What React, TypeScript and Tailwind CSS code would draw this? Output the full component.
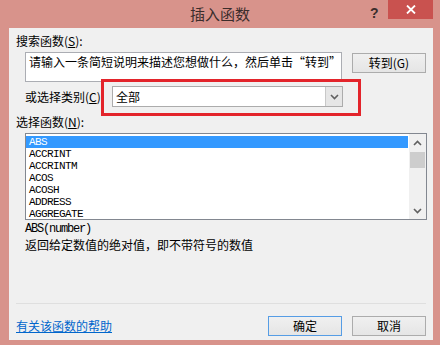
import React from "react";

const cjk = { fontFamily: '"Noto Sans CJK SC", "Noto Sans", sans-serif' };
const mono = { fontFamily: '"Liberation Mono", "Noto Sans CJK SC", monospace' };

const functions = ["ABS", "ACCRINT", "ACCRINTM", "ACOS", "ACOSH", "ADDRESS", "AGGREGATE"];

const Chevron = ({ up }: { up?: boolean }) => (
  <svg width="9" height="6" viewBox="0 0 9 6">
    <path
      d={up ? "M1 5 L4.5 1.5 L8 5" : "M1 1 L4.5 4.5 L8 1"}
      fill="none"
      stroke="#606060"
      strokeWidth="1.6"
    />
  </svg>
);

const DialogButton = ({ label, primary }: { label: string; primary?: boolean }) => (
  <button
    className={
      "w-[74px] h-[20px] flex items-center justify-center text-[12px] leading-none text-black bg-gradient-to-b from-[#f0f0f0] to-[#e5e5e5] border " +
      (primary ? "border-[#569de5]" : "border-[#acacac]")
    }
    style={cjk}
  >
    {label}
  </button>
);

const App = () => {
  return (
    <div className="relative w-[440px] h-[345px] bg-[#d8938b] flex flex-col overflow-hidden" style={cjk}>
      {/* title bar */}
      <div className="relative h-[28px] flex items-center justify-center shrink-0">
        <span className="text-[15px] text-[#3b2d2b] leading-none -mt-[1px]">插入函数</span>
        <span className="absolute left-[370px] top-[3px] text-[14px] font-bold text-[#3b2d2b]" style={{ fontFamily: '"Liberation Sans", sans-serif' }}>
          ?
        </span>
        <div className="absolute left-[388px] top-0 w-[45px] h-[19px] bg-[#c9524f] flex items-center justify-center">
          <svg width="10" height="9" viewBox="0 0 10 9">
            <path d="M1 0.5 L9 8.5 M9 0.5 L1 8.5" stroke="white" strokeWidth="1.8" />
          </svg>
        </div>
      </div>

      {/* client area */}
      <div className="mx-[9px] w-[424px] h-[312px] bg-[#f0f0f0] flex flex-col text-[12px] leading-[16px] text-black pt-[5px] pb-[4px]">
        <div className="ml-[7px] h-[16px]">搜索函数(<span className="underline">S</span>):</div>

        <div className="flex mt-[3px]">
          <div className="ml-[16px] w-[317px] h-[30px] bg-white border border-[#abadb3] pl-[3px] pt-[1px] whitespace-nowrap">
            请输入一条简短说明来描述您想做什么，然后单击“转到”
          </div>
          <div className="ml-[10px] mt-[1px]">
            <DialogButton label="转到(G)" />
          </div>
        </div>

        <div className="flex items-center mt-[4px] h-[21px]">
          <div className="ml-[16px] w-[87px] whitespace-nowrap">或选择类别(<span className="underline">C</span>):</div>
          <div className="w-[231px] h-[21px] bg-white border border-[#acacac] flex items-center">
            <span className="pl-[3px] flex-1">全部</span>
            <div className="w-[17px] h-full bg-[#e6e6e6] border-l border-[#c8c8c8] flex items-center justify-center">
              <Chevron />
            </div>
          </div>
        </div>

        <div className="ml-[7px] mt-[7px] h-[16px]">选择函数(<span className="underline">N</span>):</div>

        <div className="ml-[16px] mt-[3px] w-[402px] h-[87px] bg-white border border-[#828790] flex">
          <div className="flex-1 pt-[2px] pr-[1px]">
            {functions.map((name, i) => (
              <div
                key={name}
                className={
                  "h-[12px] pl-[3px] text-[11px] leading-[12px] tracking-[-0.6px] " +
                  (i === 0 ? "bg-[#3399ff] text-white" : "text-black")
                }
                style={mono}
              >
                {name}
              </div>
            ))}
          </div>
          <div className="w-[17px] h-full bg-[#f0f0f0] flex flex-col items-center">
            <div className="h-[17px] flex items-center justify-center">
              <Chevron up />
            </div>
            <div className="w-[15px] h-[16px] bg-[#cdcdcd] mt-[1px]" />
            <div className="flex-1" />
            <div className="h-[17px] flex items-center justify-center">
              <Chevron />
            </div>
          </div>
        </div>

        <div className="ml-[16px] mt-[1px] text-[12px] tracking-[-1.2px]" style={mono}>
          ABS(number)
        </div>
        <div className="ml-[16px]">返回给定数值的绝对值，即不带符号的数值</div>

        <div className="flex-1" />
        <div className="mx-[7px] h-px bg-[#dfdfdf]" />

        <div className="flex items-center mt-[12px] h-[20px]">
          <a className="ml-[7px] text-[#0066cc] underline">有关该函数的帮助</a>
          <div className="flex-1" />
          <DialogButton label="确定" primary />
          <div className="w-[10px]" />
          <DialogButton label="取消" />
          <div className="w-[7px]" />
        </div>
      </div>

      {/* highlight annotation */}
      <div className="absolute left-[101px] top-[79px] w-[260px] h-[37px] border-[3px] border-[#e3242b]" />
    </div>
  );
};

export default App;
